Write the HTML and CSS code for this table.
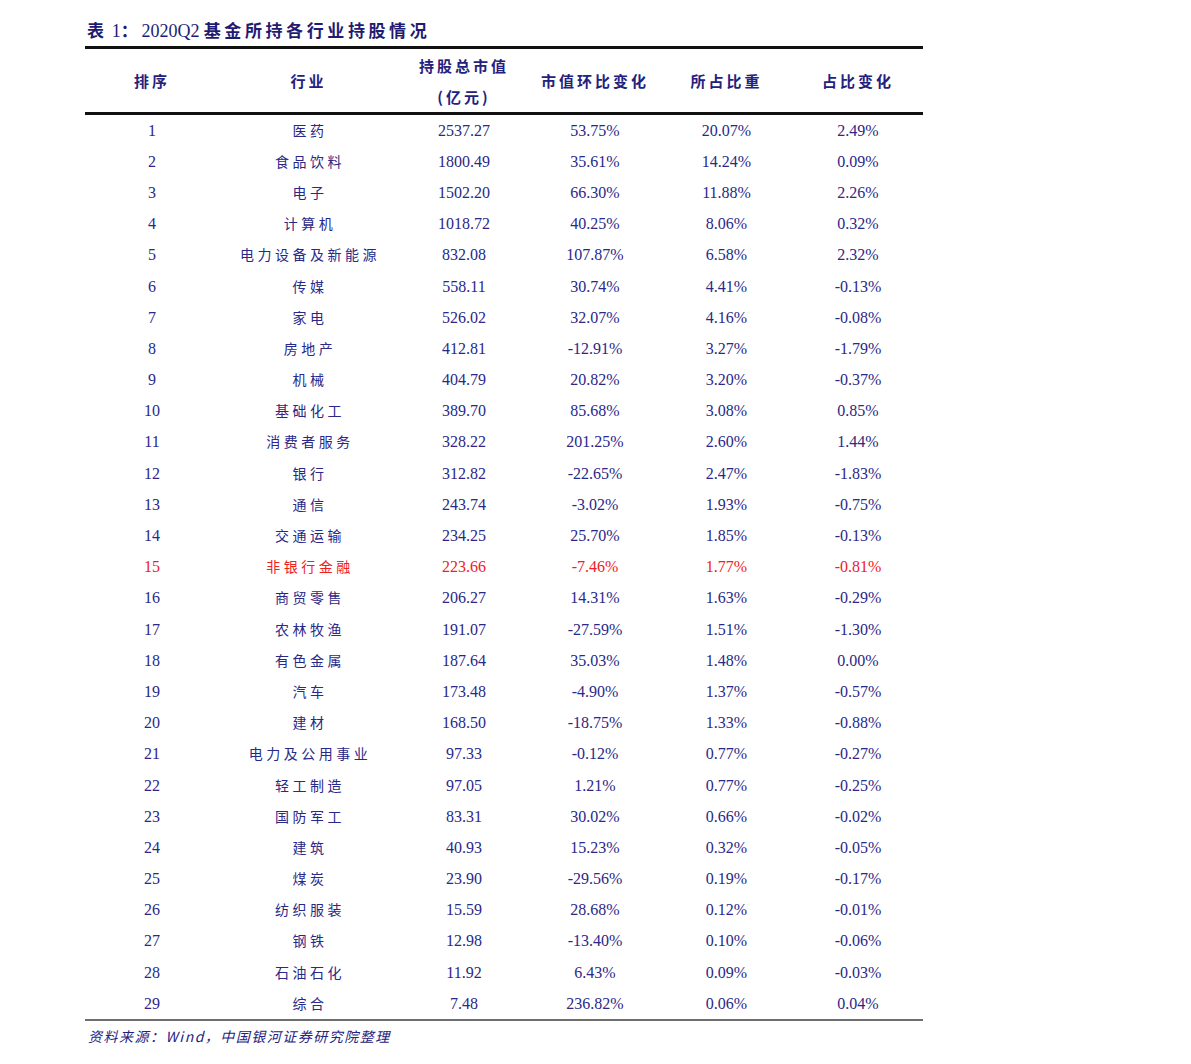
FILE: index.html
```html
<!DOCTYPE html>
<html lang="zh">
<head>
<meta charset="utf-8">
<title>2020Q2 基金所持各行业持股情况</title>
<link rel="stylesheet" href="styles.css">
</head>
<body>
<div class="page">
  <div class="title"><span class="cjk">表</span> <span class="lat">1</span><span class="cjk">：</span><span class="lat">2020Q2</span> <span class="cjk">基金所持各行业持股情况</span></div>
  <div class="table">
    <div class="head">
      <div class="hc">排序</div>
      <div class="hc">行业</div>
      <div class="hc two"><span>持股总市值</span><span>(亿元)</span></div>
      <div class="hc">市值环比变化</div>
      <div class="hc">所占比重</div>
      <div class="hc">占比变化</div>
    </div>
    <div class="body" id="body"></div>
  </div>
  <div class="source">资料来源：Wind，中国银河证券研究院整理</div>
</div>
<script>
const rows = [
["1","医药","2537.27","53.75%","20.07%","2.49%"],
["2","食品饮料","1800.49","35.61%","14.24%","0.09%"],
["3","电子","1502.20","66.30%","11.88%","2.26%"],
["4","计算机","1018.72","40.25%","8.06%","0.32%"],
["5","电力设备及新能源","832.08","107.87%","6.58%","2.32%"],
["6","传媒","558.11","30.74%","4.41%","-0.13%"],
["7","家电","526.02","32.07%","4.16%","-0.08%"],
["8","房地产","412.81","-12.91%","3.27%","-1.79%"],
["9","机械","404.79","20.82%","3.20%","-0.37%"],
["10","基础化工","389.70","85.68%","3.08%","0.85%"],
["11","消费者服务","328.22","201.25%","2.60%","1.44%"],
["12","银行","312.82","-22.65%","2.47%","-1.83%"],
["13","通信","243.74","-3.02%","1.93%","-0.75%"],
["14","交通运输","234.25","25.70%","1.85%","-0.13%"],
["15","非银行金融","223.66","-7.46%","1.77%","-0.81%"],
["16","商贸零售","206.27","14.31%","1.63%","-0.29%"],
["17","农林牧渔","191.07","-27.59%","1.51%","-1.30%"],
["18","有色金属","187.64","35.03%","1.48%","0.00%"],
["19","汽车","173.48","-4.90%","1.37%","-0.57%"],
["20","建材","168.50","-18.75%","1.33%","-0.88%"],
["21","电力及公用事业","97.33","-0.12%","0.77%","-0.27%"],
["22","轻工制造","97.05","1.21%","0.77%","-0.25%"],
["23","国防军工","83.31","30.02%","0.66%","-0.02%"],
["24","建筑","40.93","15.23%","0.32%","-0.05%"],
["25","煤炭","23.90","-29.56%","0.19%","-0.17%"],
["26","纺织服装","15.59","28.68%","0.12%","-0.01%"],
["27","钢铁","12.98","-13.40%","0.10%","-0.06%"],
["28","石油石化","11.92","6.43%","0.09%","-0.03%"],
["29","综合","7.48","236.82%","0.06%","0.04%"]
];
const body = document.getElementById('body');
rows.forEach(r => {
  const row = document.createElement('div');
  row.className = 'row' + (r[0] === '15' ? ' hl' : '');
  r.forEach((v, i) => {
    const c = document.createElement('div');
    c.className = 'cell' + (i === 1 ? ' cn' : '');
    c.textContent = v;
    row.appendChild(c);
  });
  body.appendChild(row);
});
</script>
</body>
</html>
```
FILE: styles.css
```css
html, body {
  margin: 0;
  padding: 0;
  background: #ffffff;
}
body {
  color: #25237f;
  font-family: "Liberation Serif", "DejaVu Serif", serif;
}
.page {
  padding: 18px 0 0 85px;
  width: 838px;
}
.title {
  height: 28px;
  font-size: 17px;
  line-height: 24px;
  color: #1f1b72;
  white-space: nowrap;
  padding-left: 2px;
}
.title .cjk {
  font-family: "Noto Sans CJK SC", sans-serif;
  font-weight: 700;
  letter-spacing: 3.6px;
}
.title .lat {
  font-family: "Liberation Serif", serif;
  font-size: 18px;
}
.table {
  border-top: 3px solid #111111;
  border-bottom: 2px solid #6e6e6e;
}
.head {
  display: grid;
  grid-template-columns: 134px 179px 132px 130px 133px 130px;
  height: 63px;
  border-bottom: 3px solid #111111;
}
.hc {
  display: flex;
  align-items: center;
  justify-content: center;
  font-family: "Noto Sans CJK SC", sans-serif;
  font-weight: 700;
  font-size: 15px;
  letter-spacing: 3px;
  color: #24217d;
}
.hc.two {
  flex-direction: column;
  gap: 9px;
  padding-top: 1px;
}
.hc.two span {
  line-height: 22px;
}
.body {
  display: flex;
  flex-direction: column;
}
.row {
  display: grid;
  grid-template-columns: 134px 179px 132px 130px 133px 130px;
  height: 31.2px;
  align-items: center;
}
.cell {
  text-align: center;
  font-size: 16px;
  line-height: 20px;
  color: #2a2888;
}
.cell.cn {
  font-family: "Noto Sans CJK SC", sans-serif;
  font-size: 14px;
  line-height: 18px;
  letter-spacing: 3.5px;
  padding-left: 3px;
  padding-bottom: 2px;
}
.row.hl .cell {
  color: #f0201e;
}
.source {
  margin-top: 5px;
  font-family: "Noto Sans CJK SC", sans-serif;
  font-style: italic;
  font-size: 14px;
  color: #25237f;
  padding-left: 3px;
  letter-spacing: 1.5px;
}
```
